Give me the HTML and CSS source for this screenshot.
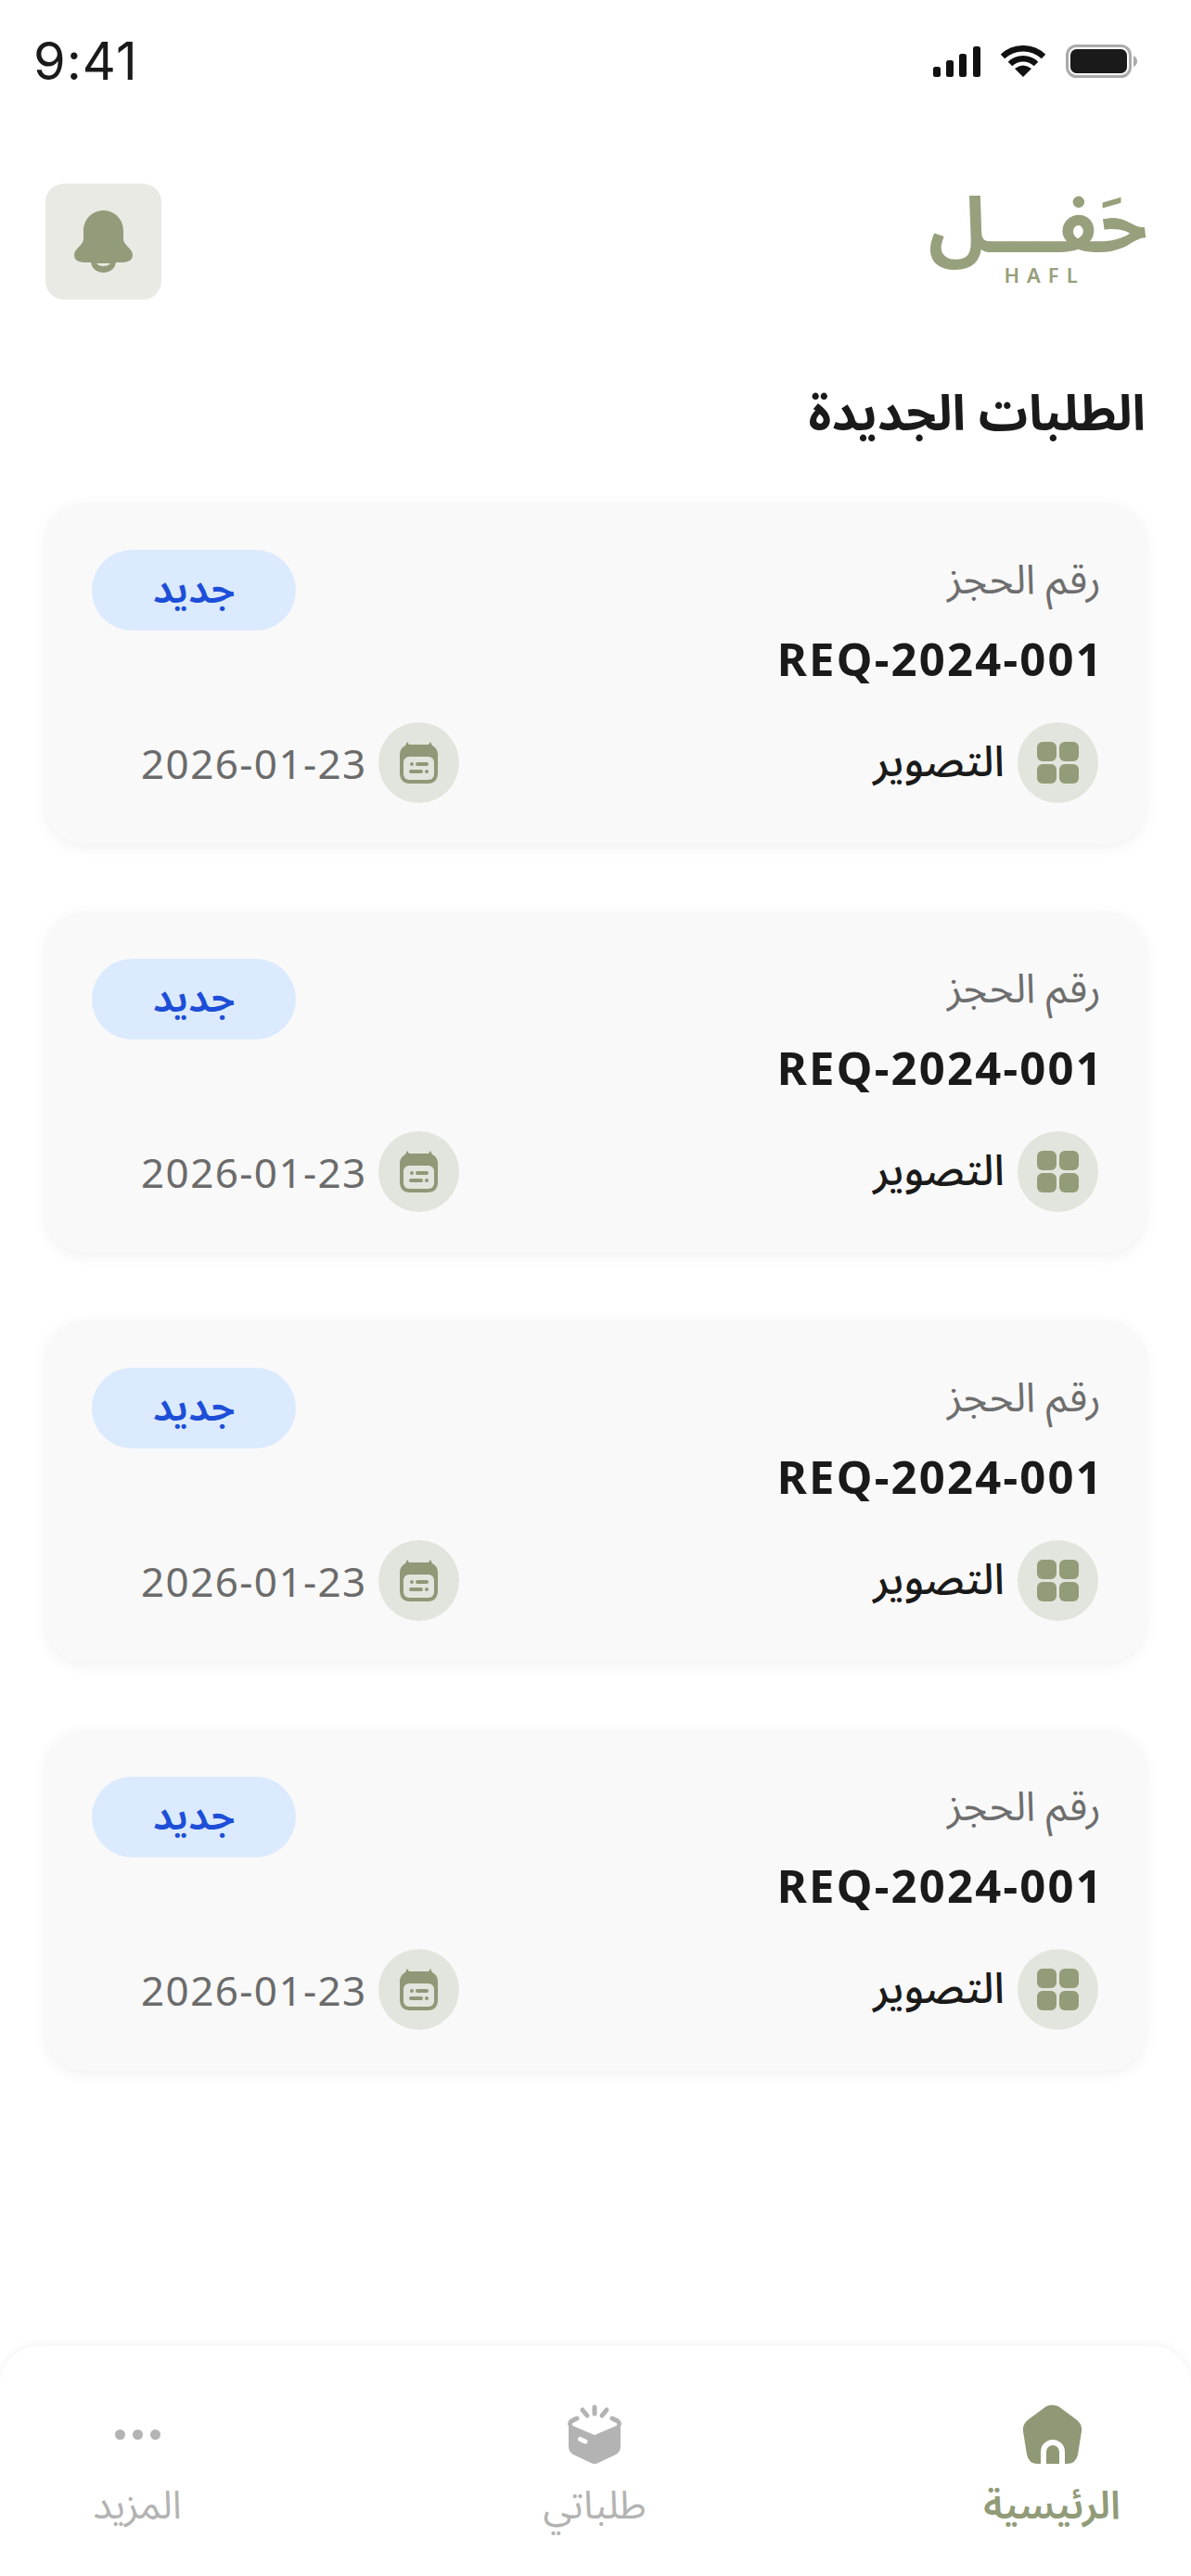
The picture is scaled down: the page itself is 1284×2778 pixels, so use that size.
FILE: index.html
```html
<!DOCTYPE html>
<html lang="ar" dir="rtl">
<head>
    <meta charset="UTF-8">
    <meta name="viewport" content="width=device-width, initial-scale=1.0">
    <title>HAFL - الطلبات الجديدة</title>
    <link rel="stylesheet" href="styles.css">
</head>
<body>

<div class="page">
    <div class="status-bar" dir="ltr">
        <span class="time">9:41</span>
        <div class="status-icons">
            <svg class="signal" viewBox="0 0 51 33"><rect x="0" y="22" width="8" height="11" rx="2.5"/><rect x="14" y="15" width="8" height="18" rx="2.5"/><rect x="28" y="8" width="8" height="25" rx="2.5"/><rect x="43" y="0" width="8" height="33" rx="2.5"/></svg>
            <svg class="wifi" viewBox="0 0 50 34"><path d="M3 12A32 32 0 0 1 47 12M11 20A20 20 0 0 1 39 20" fill="none" stroke="#111" stroke-width="6.5"/><path d="M25 34L16 25Q25 18 34 25Z" fill="#111"/></svg>
            <svg class="battery" viewBox="0 0 77 36"><rect x="1.5" y="1.5" width="68" height="33" rx="10" fill="none" stroke="#aaa" stroke-width="3"/><rect x="5" y="5" width="61" height="26" rx="6.5" fill="#1a1a1a"/><path d="M73 12Q77 14 77 18Q77 22 73 24Z" fill="#aaa"/></svg>
        </div>
    </div>

    <header class="top-bar">
        <div class="logo">
            <span class="logo-ar">حَفـــل</span>
            <span class="logo-en" dir="ltr">HAFL</span>
        </div>
        <div class="bell-btn">
            <svg class="bell" viewBox="0 0 63 67"><path d="M31.5 0C44 0 53 10 53 22V31C53 37 63 41 63 48C63 54 58 56 50 56H13C5 56 0 54 0 48C0 41 10 37 10 31V22C10 10 19 0 31.5 0Z"/><path d="M18 54C18 62 24 67 31.5 67C39 67 45 62 45 54Z"/><path class="bell-gap" d="M24 57C27 61 36 61 39 57Z"/></svg>
        </div>
    </header>

    <main class="content">
        <h1 class="page-title">الطلبات الجديدة</h1>

        <div class="card">
            <div class="card-top">
                <div class="booking">
                    <div class="booking-label">رقم الحجز</div>
                    <div class="booking-id" dir="ltr">REQ-2024-001</div>
                </div>
                <span class="chip">جديد</span>
            </div>
            <div class="card-meta">
                <div class="meta-item">
                    <span class="meta-icon">
                        <svg class="grid-icon" viewBox="0 0 45 45"><rect width="21" height="21" rx="6"/><rect x="24" width="21" height="21" rx="6"/><rect y="24" width="21" height="21" rx="6"/><rect x="24" y="24" width="21" height="21" rx="6"/></svg>
                    </span>
                    <span class="service">التصوير</span>
                </div>
                <div class="meta-item">
                    <span class="meta-icon">
                        <svg class="cal-icon" viewBox="0 0 41 45"><path d="M8 0L10 3H31L33 0L35 4Q41 7 41 14V33Q41 45 30 45H11Q0 45 0 33V14Q0 7 6 4Z"/><rect class="cal-page" x="4" y="16" width="33" height="25" rx="6"/><circle cx="13" cy="24" r="2"/><rect x="17" y="22" width="14" height="4" rx="2"/><rect x="10" y="30" width="15" height="4" rx="2"/><circle cx="29" cy="32" r="2"/></svg>
                    </span>
                    <span class="date" dir="ltr">2026-01-23</span>
                </div>
            </div>
        </div>

        <div class="card">
            <div class="card-top">
                <div class="booking">
                    <div class="booking-label">رقم الحجز</div>
                    <div class="booking-id" dir="ltr">REQ-2024-001</div>
                </div>
                <span class="chip">جديد</span>
            </div>
            <div class="card-meta">
                <div class="meta-item">
                    <span class="meta-icon">
                        <svg class="grid-icon" viewBox="0 0 45 45"><rect width="21" height="21" rx="6"/><rect x="24" width="21" height="21" rx="6"/><rect y="24" width="21" height="21" rx="6"/><rect x="24" y="24" width="21" height="21" rx="6"/></svg>
                    </span>
                    <span class="service">التصوير</span>
                </div>
                <div class="meta-item">
                    <span class="meta-icon">
                        <svg class="cal-icon" viewBox="0 0 41 45"><path d="M8 0L10 3H31L33 0L35 4Q41 7 41 14V33Q41 45 30 45H11Q0 45 0 33V14Q0 7 6 4Z"/><rect class="cal-page" x="4" y="16" width="33" height="25" rx="6"/><circle cx="13" cy="24" r="2"/><rect x="17" y="22" width="14" height="4" rx="2"/><rect x="10" y="30" width="15" height="4" rx="2"/><circle cx="29" cy="32" r="2"/></svg>
                    </span>
                    <span class="date" dir="ltr">2026-01-23</span>
                </div>
            </div>
        </div>

        <div class="card">
            <div class="card-top">
                <div class="booking">
                    <div class="booking-label">رقم الحجز</div>
                    <div class="booking-id" dir="ltr">REQ-2024-001</div>
                </div>
                <span class="chip">جديد</span>
            </div>
            <div class="card-meta">
                <div class="meta-item">
                    <span class="meta-icon">
                        <svg class="grid-icon" viewBox="0 0 45 45"><rect width="21" height="21" rx="6"/><rect x="24" width="21" height="21" rx="6"/><rect y="24" width="21" height="21" rx="6"/><rect x="24" y="24" width="21" height="21" rx="6"/></svg>
                    </span>
                    <span class="service">التصوير</span>
                </div>
                <div class="meta-item">
                    <span class="meta-icon">
                        <svg class="cal-icon" viewBox="0 0 41 45"><path d="M8 0L10 3H31L33 0L35 4Q41 7 41 14V33Q41 45 30 45H11Q0 45 0 33V14Q0 7 6 4Z"/><rect class="cal-page" x="4" y="16" width="33" height="25" rx="6"/><circle cx="13" cy="24" r="2"/><rect x="17" y="22" width="14" height="4" rx="2"/><rect x="10" y="30" width="15" height="4" rx="2"/><circle cx="29" cy="32" r="2"/></svg>
                    </span>
                    <span class="date" dir="ltr">2026-01-23</span>
                </div>
            </div>
        </div>

        <div class="card">
            <div class="card-top">
                <div class="booking">
                    <div class="booking-label">رقم الحجز</div>
                    <div class="booking-id" dir="ltr">REQ-2024-001</div>
                </div>
                <span class="chip">جديد</span>
            </div>
            <div class="card-meta">
                <div class="meta-item">
                    <span class="meta-icon">
                        <svg class="grid-icon" viewBox="0 0 45 45"><rect width="21" height="21" rx="6"/><rect x="24" width="21" height="21" rx="6"/><rect y="24" width="21" height="21" rx="6"/><rect x="24" y="24" width="21" height="21" rx="6"/></svg>
                    </span>
                    <span class="service">التصوير</span>
                </div>
                <div class="meta-item">
                    <span class="meta-icon">
                        <svg class="cal-icon" viewBox="0 0 41 45"><path d="M8 0L10 3H31L33 0L35 4Q41 7 41 14V33Q41 45 30 45H11Q0 45 0 33V14Q0 7 6 4Z"/><rect class="cal-page" x="4" y="16" width="33" height="25" rx="6"/><circle cx="13" cy="24" r="2"/><rect x="17" y="22" width="14" height="4" rx="2"/><rect x="10" y="30" width="15" height="4" rx="2"/><circle cx="29" cy="32" r="2"/></svg>
                    </span>
                    <span class="date" dir="ltr">2026-01-23</span>
                </div>
            </div>
        </div>
    </main>

    <nav class="bottom-nav">
        <div class="nav-item active">
            <span class="nav-icon">
                <svg class="home-icon" viewBox="0 0 65 64"><path d="M26 2Q32 -1 39 2L58 16Q65 21 64 29L60 54Q58 64 48 64H17Q7 64 5 54L1 29Q0 21 7 16Z"/><path class="home-door" d="M23 64V51A10 10 0 0 1 43 51V64"/></svg>
            </span>
            <span class="nav-label">الرئيسية</span>
        </div>
        <div class="nav-item">
            <span class="nav-icon">
                <svg class="box-icon" viewBox="0 0 58 64"><path d="M1 21L29 33L57 21V45Q57 51 52 54L33 63Q29 65 25 63L6 54Q1 51 1 45Z"/><path class="box-line" d="M29 3V10M16 6L21 12M42 6L37 12M10 15L4 18Q2.500 19 2.500 21M48 15L54 18Q55.500 19 55.500 21"/><rect class="box-handle" x="11" y="36" width="11" height="5" rx="2.500" transform="rotate(25 16 38)"/></svg>
            </span>
            <span class="nav-label">طلباتي</span>
        </div>
        <div class="nav-item">
            <span class="nav-icon">
                <svg class="dots-icon" viewBox="0 0 49 11"><circle cx="5.500" cy="5.500" r="5.500"/><circle cx="24.500" cy="5.500" r="5.500"/><circle cx="43.500" cy="5.500" r="5.500"/></svg>
            </span>
            <span class="nav-label">المزيد</span>
        </div>
    </nav>
</div>

</body>
</html>
```

FILE: styles.css
```css
* {
    box-sizing: border-box;
}
body {
    margin: 0;
    background-color: #fff;
    color: #1a1a1a;
    font-family: "Noto Sans Arabic", "IBM Plex Sans Arabic", "Noto Sans", "DejaVu Sans", sans-serif;
}
.page {
    display: flex;
    flex-direction: column;
    height: 2778px;
}

/* status bar */
.status-bar {
    display: flex;
    justify-content: space-between;
    align-items: center;
    height: 132px;
    padding: 0 58px 0 36px;
}
.time {
    font-family: Inter, sans-serif;
    font-size: 56px;
    letter-spacing: 1px;
    color: #1a1a1a;
}
.status-icons {
    display: flex;
    align-items: center;
    gap: 21px;
}
.signal {
    width: 51px;
    height: 33px;
    fill: #111;
}
.wifi {
    width: 50px;
    height: 34px;
}
.battery {
    width: 77px;
    height: 36px;
}

/* logo and bell */
.top-bar {
    display: flex;
    justify-content: space-between;
    align-items: flex-start;
    height: 191px;
    padding: 70px 49px 0;
}
.logo {
    display: flex;
    flex-direction: column;
    align-items: center;
    width: 232px;
    color: #97a07c;
}
.logo-ar {
    font-size: 84px;
    font-weight: 700;
    line-height: 88px;
}
.logo-en {
    font-family: "Noto Sans", sans-serif;
    font-size: 22px;
    line-height: 20px;
    letter-spacing: 8px;
    font-weight: 600;
    margin-top: -4px;
    margin-right: -14px;
}
.bell-btn {
    display: flex;
    justify-content: center;
    align-items: center;
    width: 125px;
    height: 125px;
    margin-top: -4px;
    background-color: #e9eae4;
    border-radius: 20px;
}
.bell {
    width: 63px;
    height: 67px;
    fill: #939c7a;
}
.bell-gap {
    fill: #e9eae4;
}

/* list */
.content {
    flex: 1;
    padding: 92px 49px 0;
}
.page-title {
    margin: 0 0 62px;
    font-size: 53px;
    line-height: 65px;
    font-weight: 700;
}
.card {
    height: 368px;
    margin-bottom: 73px;
    padding: 51px 51px 44px 50px;
    background-color: #f9f9f9;
    border-radius: 42px;
    box-shadow: 0 4px 16px rgba(0, 0, 0, 0.06);
}
.card-top {
    display: flex;
    justify-content: space-between;
    align-items: flex-start;
    height: 186px;
}
.booking-label {
    margin-right: -3px;
    padding-top: 3px;
    font-size: 44px;
    line-height: 60px;
    color: #6e6e6e;
}
.booking-id {
    margin-top: 24px;
    margin-right: -6px;
    font-family: "Noto Sans", sans-serif;
    font-size: 49px;
    line-height: 60px;
    font-weight: 700;
    letter-spacing: 2.2px;
    text-align: right;
}
.chip {
    display: flex;
    justify-content: center;
    align-items: center;
    width: 220px;
    height: 87px;
    background-color: #dbeafe;
    color: #1d4ed8;
    font-size: 43px;
    font-weight: 600;
    border-radius: 44px;
}
.card-meta {
    display: flex;
    justify-content: space-between;
    padding-left: 53px;
}
.meta-item {
    display: flex;
    align-items: center;
    gap: 14px;
}
.meta-icon {
    display: flex;
    justify-content: center;
    align-items: center;
    width: 87px;
    height: 87px;
    background-color: #e2e5dd;
    border-radius: 50%;
}
.grid-icon {
    width: 45px;
    height: 45px;
    fill: #929c78;
}
.cal-icon {
    width: 41px;
    height: 45px;
    fill: #8f9877;
}
.cal-page {
    fill: #e2e5dd;
}
.service {
    font-size: 46px;
    line-height: 60px;
    font-weight: 500;
}
.date {
    margin-right: -2px;
    font-family: "Noto Sans", sans-serif;
    font-size: 44px;
    line-height: 60px;
    letter-spacing: 1.4px;
    color: #6b6b6b;
}

/* bottom nav */
.bottom-nav {
    display: flex;
    justify-content: space-between;
    height: 248px;
    padding: 63px 62px 0 60px;
    background-color: #fff;
    border-radius: 42px 42px 0 0;
    box-shadow: 0 -2px 10px rgba(0, 0, 0, 0.05);
}
.nav-item {
    display: flex;
    flex-direction: column;
    align-items: center;
    width: 176px;
    color: #b3b3b3;
}
.nav-icon {
    display: flex;
    justify-content: center;
    align-items: center;
    height: 64px;
}
.nav-label {
    margin-top: 16px;
    font-size: 42px;
    line-height: 60px;
}
.active {
    color: #919b78;
}
.active .nav-label {
    font-weight: 600;
}
.home-icon {
    width: 65px;
    height: 64px;
    fill: #8f9976;
}
.home-door {
    fill: none;
    stroke: #fff;
    stroke-width: 6;
}
.box-icon {
    width: 58px;
    height: 64px;
    fill: #b3b3b3;
}
.box-line {
    fill: none;
    stroke: #b3b3b3;
    stroke-width: 5;
    stroke-linecap: round;
}
.box-handle {
    fill: #fff;
}
.dots-icon {
    width: 49px;
    height: 11px;
    fill: #b3b3b3;
}
```
